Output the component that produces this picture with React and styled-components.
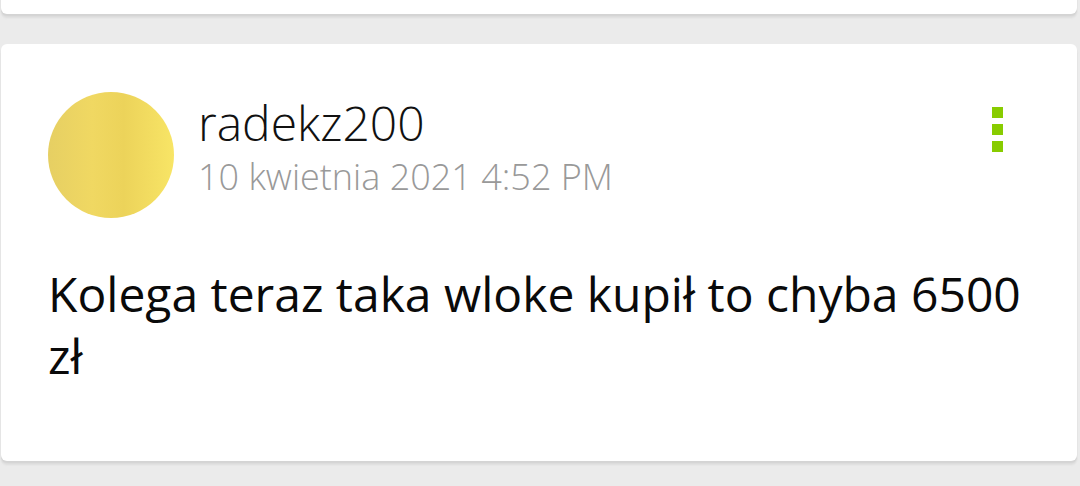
import styled, { createGlobalStyle } from 'styled-components'

const GlobalStyle = createGlobalStyle`
  html, body {
    margin: 0;
    padding: 0;
    background: #ebebeb;
    font-family: "Open Sans", "Noto Sans", sans-serif;
  }
`

const Page = styled.div`
  width: 1080px;
  height: 486px;
  overflow: hidden;
  display: flex;
  flex-direction: column;
  gap: 30px;
  background: #ebebeb;
`

const Card = styled.div`
  flex: none;
  height: ${p => p.h}px;
  margin: ${p => p.top || 0}px 3px 0 1px;
  background: #fff;
  border-radius: 6px;
  box-shadow: 0 2px 1px #d4d4d4, 0 4px 2px #dddddd;
  box-sizing: border-box;
  padding: 48px 0 0 47px;
`

const Header = styled.div`
  display: flex;
  align-items: flex-start;
`

const Avatar = styled.div`
  width: 126px;
  height: 126px;
  border-radius: 50%;
  flex: none;
  background: linear-gradient(90deg, #e6cf63 0%, #f0d862 35%, #ecd35a 60%, #f8e566 100%);
`

const Meta = styled.div`
  display: flex;
  flex-direction: column;
  margin-left: 24px;
  padding-top: 3px;
  flex: 1;
`

const Name = styled.div`
  font-size: 48px;
  font-weight: 300;
  color: #111;
  line-height: 56px;
`

const Date = styled.div`
  font-size: 36px;
  font-weight: 300;
  color: #999;
  line-height: 52px;
`

const Menu = styled.div`
  display: flex;
  flex-direction: column;
  gap: 6px;
  margin: 15px 74px 0 0;
`

const Dot = styled.span`
  width: 11px;
  height: 11px;
  background: #88cc00;
`

const Body = styled.p`
  margin: 45px 40px 0 0;
  font-size: 48px;
  line-height: 62px;
  color: #0a0a0a;
`

export default function App() {
  return (
    <Page>
      <GlobalStyle />
      <Card h={100} top={-86} />
      <Card h={417}>
        <Header>
          <Avatar />
          <Meta>
            <Name>radekz200</Name>
            <Date>10 kwietnia 2021 4:52 PM</Date>
          </Meta>
          <Menu>
            <Dot />
            <Dot />
            <Dot />
          </Menu>
        </Header>
        <Body>Kolega teraz taka wloke kupił to chyba 6500 zł</Body>
      </Card>
    </Page>
  )
}
